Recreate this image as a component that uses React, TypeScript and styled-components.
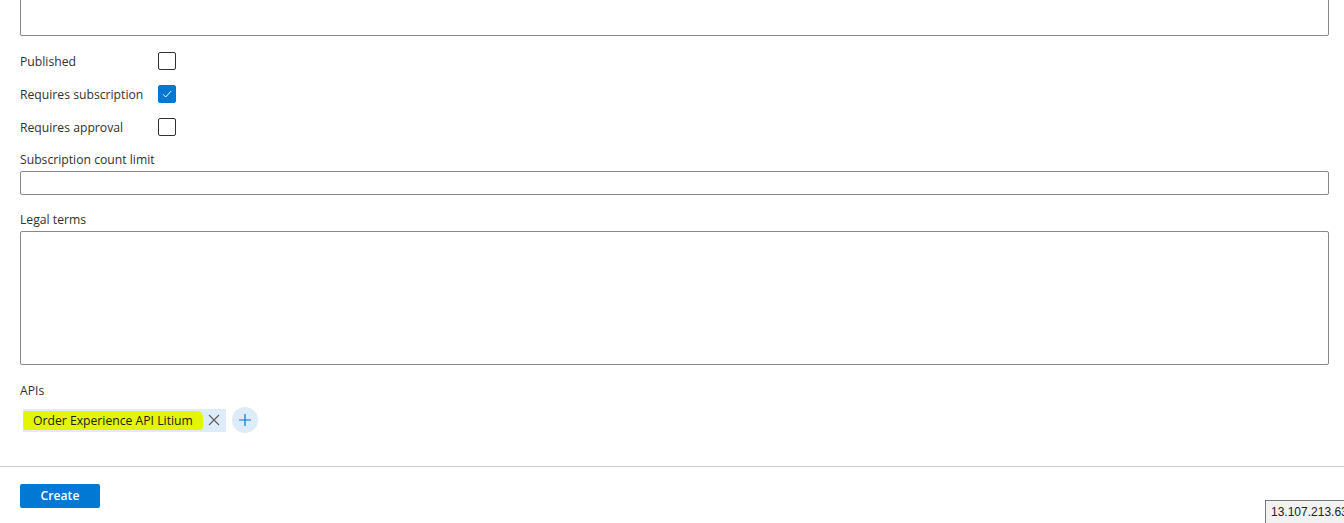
import { createGlobalStyle, styled } from "styled-components";

const GlobalStyle = createGlobalStyle`
  html, body {
    margin: 0;
    padding: 0;
    background: #fff;
    overflow: hidden;
  }
  body {
    font-family: "Open Sans", "Noto Sans", sans-serif;
    color: #323130;
  }
`;

const Page = styled.div`
  width: 1344px;
  height: 523px;
  overflow: hidden;
  position: relative;
`;

const Form = styled.div`
  display: flex;
  flex-direction: column;
  padding: 0 15px 0 20px;
`;

const Field = styled.div<{ $gap?: number }>`
  display: flex;
  flex-direction: column;
  margin-top: ${(p) => p.$gap ?? 14}px;
`;

const Label = styled.div`
  font-size: 12.2px;
  line-height: 22px;
  height: 20px;
  color: #323130;
`;

const TextBox = styled.div<{ $h: number }>`
  box-sizing: border-box;
  height: ${(p) => p.$h}px;
  border: 1px solid #8a8886;
  border-radius: 2px;
  background: #fff;
  margin-top: 2px;
`;

const ClippedBox = styled(TextBox)`
  margin-top: -30px;
`;

const CheckList = styled.div`
  display: flex;
  flex-direction: column;
  gap: 15px;
  margin-top: 15px;
`;

const CheckRow = styled.div`
  display: grid;
  grid-template-columns: 138px 18px;
  align-items: center;
  height: 18px;
`;

const Box = styled.div<{ $on?: boolean }>`
  box-sizing: border-box;
  width: 18px;
  height: 18px;
  border-radius: 2px;
  border: 1px solid ${(p) => (p.$on ? "#0078d4" : "#323130")};
  background: ${(p) => (p.$on ? "#0078d4" : "#fff")};
  display: flex;
  align-items: center;
  justify-content: center;
`;

const Tags = styled.div`
  display: flex;
  align-items: center;
  gap: 6px;
  margin-top: 7px;
  padding-left: 3px;
`;

const Tag = styled.div`
  display: flex;
  align-items: center;
  height: 23px;
  background: #deecf9;
  font-size: 12.2px;
  color: #201f1e;
`;

const Highlight = styled.span`
  display: flex;
  align-items: center;
  height: 19px;
  padding: 0 10px;
  background: #e4f500;
  border-radius: 2px 6px 4px 3px;
`;

const Remove = styled.span`
  display: flex;
  align-items: center;
  justify-content: center;
  width: 23px;
  height: 23px;
`;

const AddButton = styled.span`
  display: flex;
  align-items: center;
  justify-content: center;
  width: 26px;
  height: 26px;
  border-radius: 50%;
  background: #deecf9;
`;

const Footer = styled.div`
  margin-top: 33px;
  border-top: 1px solid #d2d0ce;
  padding: 16px 20px 0;
`;

const CreateButton = styled.button`
  width: 80px;
  height: 24px;
  border: none;
  border-radius: 2px;
  background: #0078d4;
  color: #fff;
  font-family: "Open Sans", "Noto Sans", sans-serif;
  font-weight: 600;
  font-size: 12.2px;
  padding: 0;
`;

const Tip = styled.div`
  position: absolute;
  left: 1265px;
  top: 500px;
  height: 23px;
  padding: 0 5px;
  box-sizing: border-box;
  border: 1px solid #767676;
  border-right: none;
  border-bottom: none;
  background: #f2f2f2;
  font-family: "Liberation Sans", Arial, sans-serif;
  font-size: 12px;
  line-height: 22px;
  color: #222;
  white-space: nowrap;
`;

const checks = [
  { label: "Published", on: false },
  { label: "Requires subscription", on: true },
  { label: "Requires approval", on: false },
];

export default function App() {
  return (
    <Page>
      <GlobalStyle />
      <Form>
        <ClippedBox $h={66} />
        <CheckList>
          {checks.map((c) => (
            <CheckRow key={c.label}>
              <Label>{c.label}</Label>
              <Box $on={c.on}>
                {c.on && (
                  <svg width="12" height="12" viewBox="0 0 12 12">
                    <path d="M2 6.3 L4.7 9 L10.2 3" fill="none" stroke="#fff" strokeWidth="1" />
                  </svg>
                )}
              </Box>
            </CheckRow>
          ))}
        </CheckList>
        <Field>
          <Label>Subscription count limit</Label>
          <TextBox $h={24} />
        </Field>
        <Field>
          <Label>Legal terms</Label>
          <TextBox $h={134} />
        </Field>
        <Field $gap={15}>
          <Label>APIs</Label>
          <Tags>
            <Tag>
              <Highlight>Order Experience API Litium</Highlight>
              <Remove>
                <svg width="12" height="12" viewBox="0 0 12 12">
                  <path d="M1 1 L11 11 M11 1 L1 11" stroke="#605e5c" strokeWidth="1.2" />
                </svg>
              </Remove>
            </Tag>
            <AddButton>
              <svg width="14" height="14" viewBox="0 0 14 14">
                <path d="M7 1 V13 M1 7 H13" stroke="#0078d4" strokeWidth="1.2" />
              </svg>
            </AddButton>
          </Tags>
        </Field>
      </Form>
      <Footer>
        <CreateButton>Create</CreateButton>
      </Footer>
      <Tip>13.107.213.63</Tip>
    </Page>
  );
}
